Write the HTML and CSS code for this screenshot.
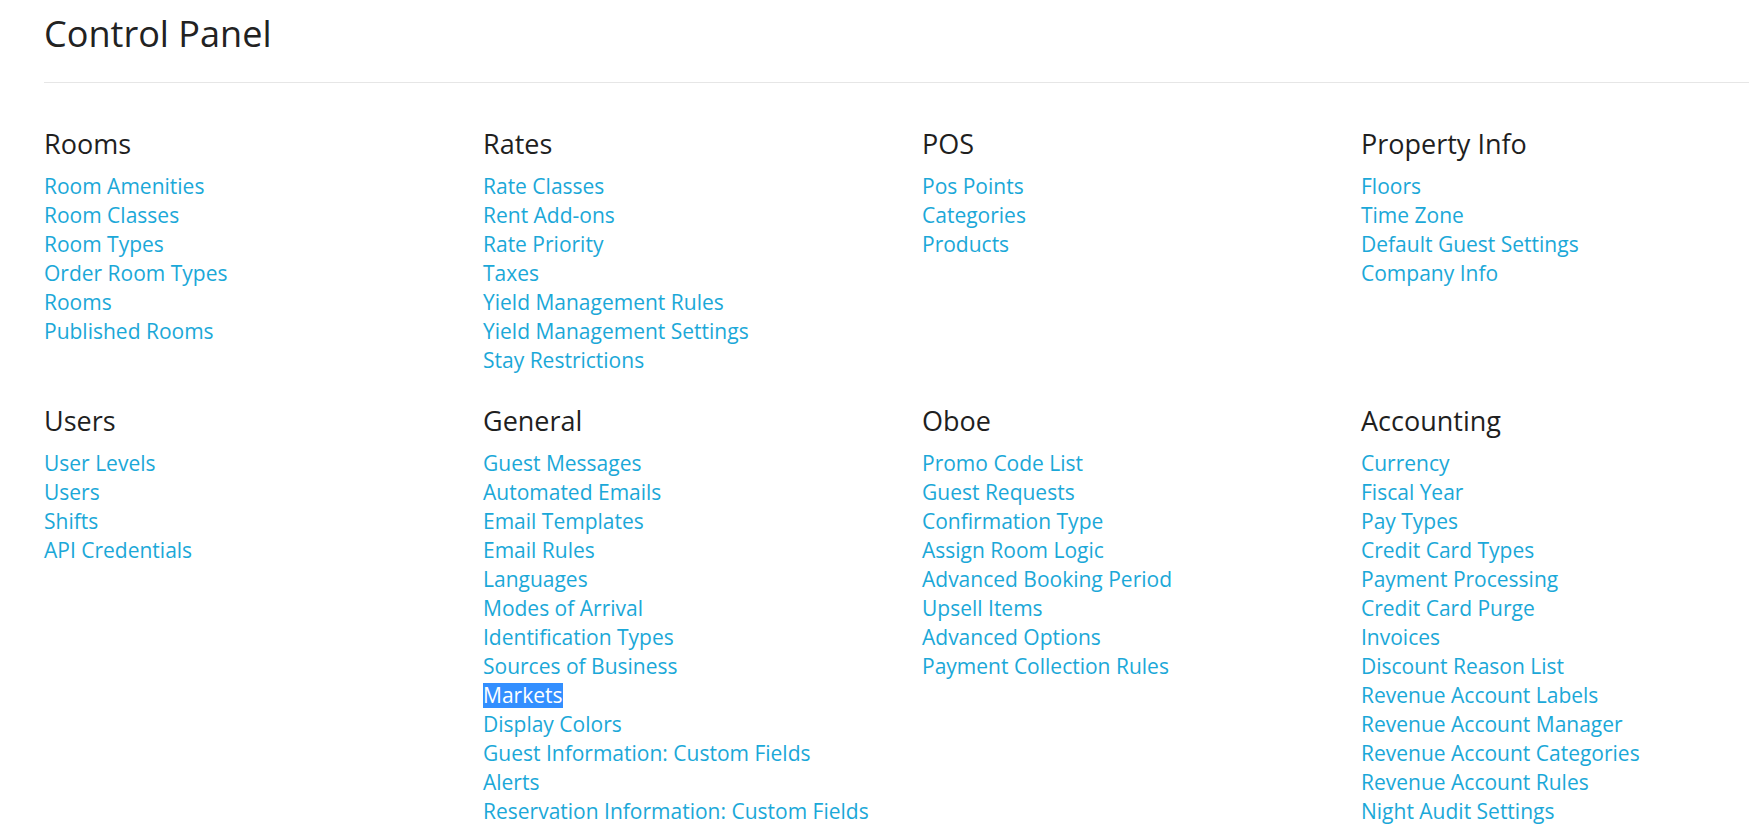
FILE: index.html
```html
<!DOCTYPE html>
<html lang="en">
<head>
<meta charset="utf-8">
<title>Control Panel</title>
<link rel="stylesheet" href="styles.css">
</head>
<body>
<div class="page">
  <h1 class="title">Control Panel</h1>
  <hr class="rule">
  <div class="grid">
    <section class="group">
      <h2 class="group-title">Rooms</h2>
      <ul class="links">
        <li><a href="#">Room Amenities</a></li>
        <li><a href="#">Room Classes</a></li>
        <li><a href="#">Room Types</a></li>
        <li><a href="#">Order Room Types</a></li>
        <li><a href="#">Rooms</a></li>
        <li><a href="#">Published Rooms</a></li>
      </ul>
    </section>
    <section class="group">
      <h2 class="group-title">Rates</h2>
      <ul class="links">
        <li><a href="#">Rate Classes</a></li>
        <li><a href="#">Rent Add-ons</a></li>
        <li><a href="#">Rate Priority</a></li>
        <li><a href="#">Taxes</a></li>
        <li><a href="#">Yield Management Rules</a></li>
        <li><a href="#">Yield Management Settings</a></li>
        <li><a href="#">Stay Restrictions</a></li>
      </ul>
    </section>
    <section class="group">
      <h2 class="group-title">POS</h2>
      <ul class="links">
        <li><a href="#">Pos Points</a></li>
        <li><a href="#">Categories</a></li>
        <li><a href="#">Products</a></li>
      </ul>
    </section>
    <section class="group">
      <h2 class="group-title">Property Info</h2>
      <ul class="links">
        <li><a href="#">Floors</a></li>
        <li><a href="#">Time Zone</a></li>
        <li><a href="#">Default Guest Settings</a></li>
        <li><a href="#">Company Info</a></li>
      </ul>
    </section>
    <section class="group">
      <h2 class="group-title">Users</h2>
      <ul class="links">
        <li><a href="#">User Levels</a></li>
        <li><a href="#">Users</a></li>
        <li><a href="#">Shifts</a></li>
        <li><a href="#">API Credentials</a></li>
      </ul>
    </section>
    <section class="group">
      <h2 class="group-title">General</h2>
      <ul class="links">
        <li><a href="#">Guest Messages</a></li>
        <li><a href="#">Automated Emails</a></li>
        <li><a href="#">Email Templates</a></li>
        <li><a href="#">Email Rules</a></li>
        <li><a href="#">Languages</a></li>
        <li><a href="#">Modes of Arrival</a></li>
        <li><a href="#">Identification Types</a></li>
        <li><a href="#">Sources of Business</a></li>
        <li><a href="#"><span class="selected">Markets</span></a></li>
        <li><a href="#">Display Colors</a></li>
        <li><a href="#">Guest Information: Custom Fields</a></li>
        <li><a href="#">Alerts</a></li>
        <li><a href="#">Reservation Information: Custom Fields</a></li>
      </ul>
    </section>
    <section class="group">
      <h2 class="group-title">Oboe</h2>
      <ul class="links">
        <li><a href="#">Promo Code List</a></li>
        <li><a href="#">Guest Requests</a></li>
        <li><a href="#">Confirmation Type</a></li>
        <li><a href="#">Assign Room Logic</a></li>
        <li><a href="#">Advanced Booking Period</a></li>
        <li><a href="#">Upsell Items</a></li>
        <li><a href="#">Advanced Options</a></li>
        <li><a href="#">Payment Collection Rules</a></li>
      </ul>
    </section>
    <section class="group">
      <h2 class="group-title">Accounting</h2>
      <ul class="links">
        <li><a href="#">Currency</a></li>
        <li><a href="#">Fiscal Year</a></li>
        <li><a href="#">Pay Types</a></li>
        <li><a href="#">Credit Card Types</a></li>
        <li><a href="#">Payment Processing</a></li>
        <li><a href="#">Credit Card Purge</a></li>
        <li><a href="#">Invoices</a></li>
        <li><a href="#">Discount Reason List</a></li>
        <li><a href="#">Revenue Account Labels</a></li>
        <li><a href="#">Revenue Account Manager</a></li>
        <li><a href="#">Revenue Account Categories</a></li>
        <li><a href="#">Revenue Account Rules</a></li>
        <li><a href="#">Night Audit Settings</a></li>
      </ul>
    </section>
  </div>
</div>
</body>
</html>
```

FILE: styles.css
```css
html, body {
  margin: 0;
  padding: 0;
  background: #ffffff;
}

body {
  font-family: "Open Sans", "Noto Sans", "Liberation Sans", sans-serif;
  color: #222222;
  overflow: hidden;
}

.page {
  padding-left: 44px;
}

.title {
  margin: 13px 0 0 0;
  font-size: 36.1px;
  font-weight: 400;
  line-height: 40px;
  color: #222222;
}

.rule {
  margin: 29px 0 0 0;
  border: 0;
  border-top: 1px solid #e6e6e6;
  height: 0;
}

.grid {
  display: grid;
  grid-template-columns: repeat(4, 439px);
  row-gap: 30px;
  margin-top: 45px;
}

.group-title {
  margin: 0 0 12px 0;
  font-size: 27px;
  font-weight: 400;
  line-height: 32px;
  color: #1f1f1f;
}

.links {
  list-style: none;
  margin: 0;
  padding: 0;
}

.links li {
  font-size: 21px;
  line-height: 29px;
  white-space: nowrap;
}

.links a {
  color: #1ba8d8;
  text-decoration: none;
}

.selected {
  display: inline-block;
  background: #338fff;
  color: #ffffff;
  line-height: 25px;
  padding-right: 1px;
}
```
